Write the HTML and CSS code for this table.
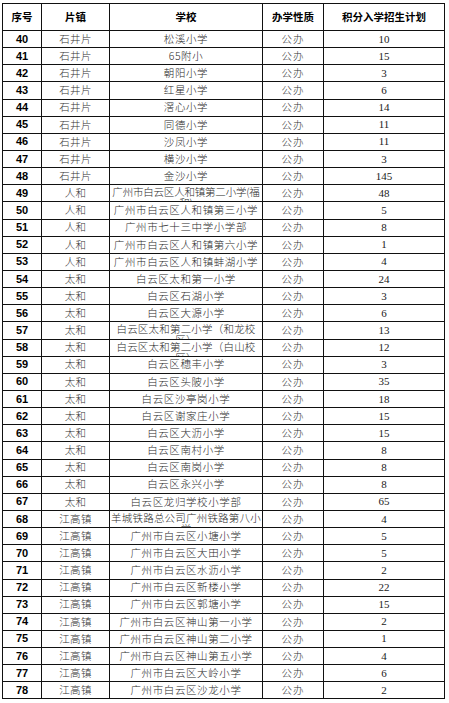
FILE: index.html
```html
<!DOCTYPE html>
<html lang="zh-CN">
<head>
<meta charset="utf-8">
<title>积分入学招生计划</title>
<link rel="stylesheet" href="styles.css">
</head>
<body>
<div class="table">
  <div class="row head">
    <div class="cell">序号</div>
    <div class="cell">片镇</div>
    <div class="cell">学校</div>
    <div class="cell">办学性质</div>
    <div class="cell">积分入学招生计划</div>
  </div>
  <div class="row"><div class="cell no">40</div><div class="cell town">石井片</div><div class="cell school">松溪小学</div><div class="cell kind">公办</div><div class="cell num">10</div></div>
  <div class="row"><div class="cell no">41</div><div class="cell town">石井片</div><div class="cell school">65附小</div><div class="cell kind">公办</div><div class="cell num">15</div></div>
  <div class="row"><div class="cell no">42</div><div class="cell town">石井片</div><div class="cell school">朝阳小学</div><div class="cell kind">公办</div><div class="cell num">3</div></div>
  <div class="row"><div class="cell no">43</div><div class="cell town">石井片</div><div class="cell school">红星小学</div><div class="cell kind">公办</div><div class="cell num">6</div></div>
  <div class="row"><div class="cell no">44</div><div class="cell town">石井片</div><div class="cell school">滘心小学</div><div class="cell kind">公办</div><div class="cell num">14</div></div>
  <div class="row"><div class="cell no">45</div><div class="cell town">石井片</div><div class="cell school">同德小学</div><div class="cell kind">公办</div><div class="cell num">11</div></div>
  <div class="row"><div class="cell no">46</div><div class="cell town">石井片</div><div class="cell school">沙凤小学</div><div class="cell kind">公办</div><div class="cell num">11</div></div>
  <div class="row"><div class="cell no">47</div><div class="cell town">石井片</div><div class="cell school">横沙小学</div><div class="cell kind">公办</div><div class="cell num">3</div></div>
  <div class="row"><div class="cell no">48</div><div class="cell town">石井片</div><div class="cell school">金沙小学</div><div class="cell kind">公办</div><div class="cell num">145</div></div>
  <div class="row"><div class="cell no">49</div><div class="cell town">人和</div><div class="cell school wrap tight"><div class="lines">广州市白云区人和镇第二小学(福<br>和)</div></div><div class="cell kind">公办</div><div class="cell num">48</div></div>
  <div class="row"><div class="cell no">50</div><div class="cell town">人和</div><div class="cell school">广州市白云区人和镇第三小学</div><div class="cell kind">公办</div><div class="cell num">5</div></div>
  <div class="row"><div class="cell no">51</div><div class="cell town">人和</div><div class="cell school">广州市七十三中学小学部</div><div class="cell kind">公办</div><div class="cell num">8</div></div>
  <div class="row"><div class="cell no">52</div><div class="cell town">人和</div><div class="cell school">广州市白云区人和镇第六小学</div><div class="cell kind">公办</div><div class="cell num">1</div></div>
  <div class="row"><div class="cell no">53</div><div class="cell town">人和</div><div class="cell school">广州市白云区人和镇蚌湖小学</div><div class="cell kind">公办</div><div class="cell num">4</div></div>
  <div class="row"><div class="cell no">54</div><div class="cell town">太和</div><div class="cell school">白云区太和第一小学</div><div class="cell kind">公办</div><div class="cell num">24</div></div>
  <div class="row"><div class="cell no">55</div><div class="cell town">太和</div><div class="cell school">白云区石湖小学</div><div class="cell kind">公办</div><div class="cell num">3</div></div>
  <div class="row"><div class="cell no">56</div><div class="cell town">太和</div><div class="cell school">白云区大源小学</div><div class="cell kind">公办</div><div class="cell num">6</div></div>
  <div class="row"><div class="cell no">57</div><div class="cell town">太和</div><div class="cell school wrap"><div class="lines">白云区太和第二小学（和龙校<br>区）</div></div><div class="cell kind">公办</div><div class="cell num">13</div></div>
  <div class="row"><div class="cell no">58</div><div class="cell town">太和</div><div class="cell school wrap"><div class="lines">白云区太和第二小学（白山校<br>区）</div></div><div class="cell kind">公办</div><div class="cell num">12</div></div>
  <div class="row"><div class="cell no">59</div><div class="cell town">太和</div><div class="cell school">白云区穗丰小学</div><div class="cell kind">公办</div><div class="cell num">3</div></div>
  <div class="row"><div class="cell no">60</div><div class="cell town">太和</div><div class="cell school">白云区头陂小学</div><div class="cell kind">公办</div><div class="cell num">35</div></div>
  <div class="row"><div class="cell no">61</div><div class="cell town">太和</div><div class="cell school">白云区沙亭岗小学</div><div class="cell kind">公办</div><div class="cell num">18</div></div>
  <div class="row"><div class="cell no">62</div><div class="cell town">太和</div><div class="cell school">白云区谢家庄小学</div><div class="cell kind">公办</div><div class="cell num">15</div></div>
  <div class="row"><div class="cell no">63</div><div class="cell town">太和</div><div class="cell school">白云区大沥小学</div><div class="cell kind">公办</div><div class="cell num">15</div></div>
  <div class="row"><div class="cell no">64</div><div class="cell town">太和</div><div class="cell school">白云区南村小学</div><div class="cell kind">公办</div><div class="cell num">8</div></div>
  <div class="row"><div class="cell no">65</div><div class="cell town">太和</div><div class="cell school">白云区南岗小学</div><div class="cell kind">公办</div><div class="cell num">8</div></div>
  <div class="row"><div class="cell no">66</div><div class="cell town">太和</div><div class="cell school">白云区永兴小学</div><div class="cell kind">公办</div><div class="cell num">8</div></div>
  <div class="row"><div class="cell no">67</div><div class="cell town">太和</div><div class="cell school">白云区龙归学校小学部</div><div class="cell kind">公办</div><div class="cell num">65</div></div>
  <div class="row"><div class="cell no">68</div><div class="cell town">江高镇</div><div class="cell school wrap"><div class="lines">羊城铁路总公司广州铁路第八小<br>学</div></div><div class="cell kind">公办</div><div class="cell num">4</div></div>
  <div class="row"><div class="cell no">69</div><div class="cell town">江高镇</div><div class="cell school">广州市白云区小塘小学</div><div class="cell kind">公办</div><div class="cell num">5</div></div>
  <div class="row"><div class="cell no">70</div><div class="cell town">江高镇</div><div class="cell school">广州市白云区大田小学</div><div class="cell kind">公办</div><div class="cell num">5</div></div>
  <div class="row"><div class="cell no">71</div><div class="cell town">江高镇</div><div class="cell school">广州市白云区水沥小学</div><div class="cell kind">公办</div><div class="cell num">2</div></div>
  <div class="row"><div class="cell no">72</div><div class="cell town">江高镇</div><div class="cell school">广州市白云区新楼小学</div><div class="cell kind">公办</div><div class="cell num">22</div></div>
  <div class="row"><div class="cell no">73</div><div class="cell town">江高镇</div><div class="cell school">广州市白云区郭塘小学</div><div class="cell kind">公办</div><div class="cell num">15</div></div>
  <div class="row"><div class="cell no">74</div><div class="cell town">江高镇</div><div class="cell school">广州市白云区神山第一小学</div><div class="cell kind">公办</div><div class="cell num">2</div></div>
  <div class="row"><div class="cell no">75</div><div class="cell town">江高镇</div><div class="cell school">广州市白云区神山第二小学</div><div class="cell kind">公办</div><div class="cell num">1</div></div>
  <div class="row"><div class="cell no">76</div><div class="cell town">江高镇</div><div class="cell school">广州市白云区神山第五小学</div><div class="cell kind">公办</div><div class="cell num">4</div></div>
  <div class="row"><div class="cell no">77</div><div class="cell town">江高镇</div><div class="cell school">广州市白云区大岭小学</div><div class="cell kind">公办</div><div class="cell num">6</div></div>
  <div class="row"><div class="cell no">78</div><div class="cell town">江高镇</div><div class="cell school">广州市白云区沙龙小学</div><div class="cell kind">公办</div><div class="cell num">2</div></div>
</div>
</body>
</html>
```

FILE: styles.css
```css
html, body {
  margin: 0;
  padding: 0;
  background: #ffffff;
}

body {
  font-family: "Noto Sans CJK SC", "Liberation Sans", sans-serif;
  color: #2a2a2a;
}

.table {
  margin: 3px 0 0 2px;
  width: 443px;
  box-sizing: border-box;
  border-left: 1px solid #111;
  border-top: 1px solid #111;
}

.row {
  display: grid;
  grid-template-columns: 39px 68px 153px 61px 121px;
  height: 17.15px;
}

.row.head {
  height: 27px;
}

.cell {
  box-sizing: border-box;
  border-right: 1px solid #111;
  border-bottom: 1px solid #111;
  display: flex;
  align-items: center;
  justify-content: center;
  overflow: hidden;
  white-space: nowrap;
  font-size: 10.5px;
  line-height: 1;
}

.head .cell {
  font-weight: 700;
  color: #000;
  font-size: 10.5px;
}

.no {
  font-family: "Liberation Sans", "DejaVu Sans", sans-serif;
  font-weight: 700;
  font-size: 11px;
  color: #000;
}

.town {
  font-weight: 300;
  letter-spacing: 0.3px;
  color: #333;
}

.school {
  font-weight: 300;
  letter-spacing: 0.6px;
  color: #2a2a2a;
}

.kind {
  font-weight: 300;
  letter-spacing: 1px;
  color: #333;
}

.num {
  font-family: "Liberation Serif", "DejaVu Serif", serif;
  font-size: 11px;
  color: #222;
}

.wrap {
  align-items: flex-start;
  letter-spacing: 0.2px;
}

.wrap.tight {
  letter-spacing: -0.2px;
}

.lines {
  line-height: 11px;
  padding-top: 1px;
  text-align: center;
}
```
